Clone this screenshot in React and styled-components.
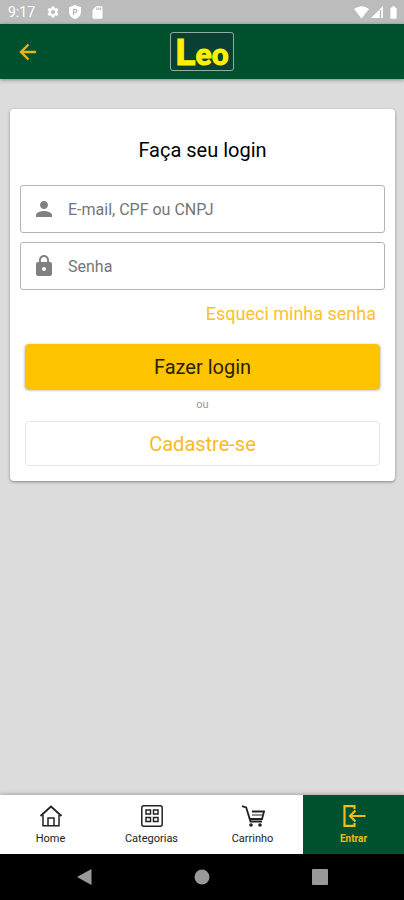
import React, { useState } from "react";
import styled, { createGlobalStyle } from "styled-components";
import {
  MdBatteryFull,
  MdLock,
  MdPerson,
  MdSdCard,
  MdSettings,
} from "react-icons/md";

const GlobalStyle = createGlobalStyle`
  * {
    box-sizing: border-box;
  }
  body {
    margin: 0;
    background-color: #dcdcdc;
    font-family: Roboto, "Liberation Sans", sans-serif;
  }
  button,
  input {
    font-family: inherit;
  }
`;

const Container = styled.div`
  min-height: 100vh;
  display: flex;
  flex-direction: column;
`;

const StatusBar = styled.div`
  height: 24px;
  padding: 0 3px 0 8px;
  display: flex;
  align-items: center;
  justify-content: space-between;
  background-color: #bcbcbc;
  color: white;
`;

const StatusGroup = styled.div`
  display: flex;
  align-items: center;
  gap: ${props => props.$gap}px;
`;

const Clock = styled.span`
  margin-right: 3px;
  font-size: 14px;
`;

const Header = styled.header`
  height: 55px;
  padding: 0 16px;
  display: grid;
  grid-template-columns: 1fr auto 1fr;
  align-items: center;
  background-color: #00512d;
  box-shadow: 0 1px 4px rgba(0, 0, 0, 0.4);
`;

const BackButton = styled.button`
  justify-self: start;
  display: flex;
  padding: 0;
  border: none;
  background: none;
  color: #eab313;
  cursor: pointer;
`;

const Logo = styled.div`
  padding: 2px 4px 0;
  border: 1px solid #8fae9c;
  border-radius: 3px;
  background-color: #0a4034;
  color: #fff000;
  font-size: 37px;
  line-height: 35px;
  font-weight: 700;
  -webkit-text-stroke: 1px #fff000;
`;

const LogoSmall = styled.span`
  font-size: 30px;
  line-height: 30px;
`;

const Main = styled.main`
  flex: 1;
  padding: 30px 9px 30px 10px;
`;

const Card = styled.form`
  padding: 29px 10px 15px;
  display: flex;
  flex-direction: column;
  background-color: white;
  border-radius: 4px;
  box-shadow: 0 1px 3px rgba(0, 0, 0, 0.4);
`;

const Title = styled.h1`
  margin: 0 0 23px;
  font-size: 20px;
  line-height: 24px;
  font-weight: 400;
  text-align: center;
  color: black;
`;

const Field = styled.label`
  height: 48px;
  margin-bottom: 9px;
  padding: 0 12px 0 11px;
  display: flex;
  align-items: center;
  gap: 12px;
  border: 1px solid #b4b4b4;
  border-radius: 3px;
  color: #808080;
`;

const Input = styled.input`
  flex: 1;
  min-width: 0;
  padding: 0;
  border: none;
  outline: none;
  background: none;
  font-size: 16px;
  color: #222;
  &::placeholder {
    color: #757575;
    opacity: 1;
  }
`;

const ForgotLink = styled.a`
  align-self: flex-end;
  margin: 3px 9px 18px;
  font-size: 18px;
  line-height: 24px;
  text-decoration: none;
  color: #fdbf30;
`;

const Actions = styled.div`
  padding: 0 5px;
  display: flex;
  flex-direction: column;
`;

const Button = styled.button`
  height: 45px;
  border: 1px solid ${props => (props.$outlined ? "#e6e6e6" : "#ffc400")};
  border-radius: 4px;
  background-color: ${props => (props.$outlined ? "white" : "#ffc400")};
  box-shadow: ${props => (props.$outlined ? "none" : "0 1px 3px rgba(0, 0, 0, 0.4)")};
  color: ${props => (props.$outlined ? "#fdb924" : "#2b2100")};
  font-size: 20px;
  cursor: pointer;
`;

const Divider = styled.span`
  font-size: 11px;
  line-height: 32px;
  text-align: center;
  color: #999;
`;

const TabBar = styled.nav`
  height: 59px;
  display: grid;
  grid-template-columns: repeat(4, 1fr);
  background-color: white;
  box-shadow: 0 -1px 4px rgba(0, 0, 0, 0.25);
`;

const Tab = styled.a`
  padding-top: 9px;
  display: flex;
  flex-direction: column;
  align-items: center;
  gap: 4px;
  font-size: ${props => (props.$active ? 10 : 11)}px;
  line-height: 14px;
  text-decoration: none;
  font-weight: ${props => (props.$active ? 700 : 400)};
  color: ${props => (props.$active ? "#f0bd18" : "#222")};
  background-color: ${props => (props.$active ? "#00512d" : "white")};
`;

const SystemBar = styled.div`
  height: 46px;
  padding: 0 76px;
  display: flex;
  align-items: center;
  justify-content: space-between;
  background-color: black;
`;

const SystemButton = styled.button`
  display: flex;
  padding: 0;
  border: none;
  background: none;
  cursor: pointer;
`;

const LineIcon = ({ children, width = 1.5 }) => (
  <svg
    width="24"
    height="24"
    viewBox="0 0 24 24"
    fill="none"
    stroke="currentColor"
    strokeWidth={width}
    aria-hidden="true"
  >
    {children}
  </svg>
);

const BackIcon = () => (
  <LineIcon width={2.4}>
    <path d="M20 12H5.500M12.500 4.500 5 12l7.500 7.500" />
  </LineIcon>
);

const HomeIcon = () => (
  <LineIcon>
    <path d="M1.500 12 12 2.500 22.500 12" strokeWidth="1.8" />
    <path d="M4 11v10.800h16V11" />
    <path d="M9 21.500v-7.500h6v7.500" />
  </LineIcon>
);

const CategoriesIcon = () => (
  <LineIcon>
    <rect x="1.800" y="1.800" width="20.400" height="20.400" rx="2" />
    <rect x="6" y="6" width="4.500" height="4" />
    <rect x="13.500" y="6" width="4.500" height="4" />
    <rect x="6" y="13.500" width="4.500" height="4" />
    <rect x="13.500" y="13.500" width="4.500" height="4" />
  </LineIcon>
);

const CartIcon = () => (
  <LineIcon>
    <path d="M1 2.200 5.200 3.500 9.500 17.500H21" strokeWidth="1.8" />
    <path d="M11 7.500h12l-2 7.500H9" strokeWidth="1.8" />
    <path d="M11 11h10.500" strokeWidth="1" />
    <circle cx="10" cy="21" r="1.800" fill="currentColor" stroke="none" />
    <circle cx="19" cy="21" r="1.800" fill="currentColor" stroke="none" />
  </LineIcon>
);

const LoginIcon = () => (
  <LineIcon width={2.2}>
    <path d="M12.500 5V2.200h-10v19.600h10V19" />
    <path d="M23.500 12H8M13.500 6.500 8 12l5.500 5.500" />
  </LineIcon>
);

const tabs = [
  { label: "Home", Icon: HomeIcon },
  { label: "Categorias", Icon: CategoriesIcon },
  { label: "Carrinho", Icon: CartIcon },
  { label: "Entrar", Icon: LoginIcon, active: true },
];

const App = () => {
  const [user, setUser] = useState("");
  const [password, setPassword] = useState("");

  const handleSubmit = (e) => {
    e.preventDefault();
  };

  return (
    <Container>
      <GlobalStyle />
      <StatusBar>
        <StatusGroup $gap={8}>
          <Clock>9:17</Clock>
          <MdSettings size={14} />
          <svg width="14" height="14" viewBox="0 0 14 14">
            <path d="M7 0 13 2.300V7c0 3.300-2.600 6-6 7-3.400-1-6-3.700-6-7V2.300z" fill="white" />
            <path d="M5.500 10V4.500h1.800a1.500 1.500 0 0 1 0 3H5.500" fill="none" stroke="#bcbcbc" strokeWidth="1.3" />
          </svg>
          <MdSdCard size={15} color="white" />
        </StatusGroup>
        <StatusGroup $gap={2}>
          <svg width="15" height="13" viewBox="0 0 15 13">
            <path d="M0 3Q7.500-2.500 15 3L7.500 12.500z" fill="white" />
          </svg>
          <svg width="13" height="13" viewBox="0 0 13 13">
            <path d="M12 0v12H0z" fill="white" />
            <path d="M9.500 4v8" stroke="#bcbcbc" strokeWidth="1.5" />
          </svg>
          <MdBatteryFull size={15} />
        </StatusGroup>
      </StatusBar>

      <Header>
        <BackButton type="button" aria-label="Voltar">
          <BackIcon />
        </BackButton>
        <Logo>
          L<LogoSmall>eo</LogoSmall>
        </Logo>
      </Header>

      <Main>
        <Card onSubmit={handleSubmit}>
          <Title>Faça seu login</Title>
          <Field>
            <MdPerson size={24} />
            <Input
              placeholder="E-mail, CPF ou CNPJ"
              aria-label="E-mail, CPF ou CNPJ"
              value={user}
              onChange={e => setUser(e.target.value)}
            />
          </Field>
          <Field>
            <MdLock size={24} />
            <Input
              type="password"
              placeholder="Senha"
              aria-label="Senha"
              value={password}
              onChange={e => setPassword(e.target.value)}
            />
          </Field>
          <ForgotLink href="#senha">Esqueci minha senha</ForgotLink>
          <Actions>
            <Button type="submit">Fazer login</Button>
            <Divider>ou</Divider>
            <Button type="button" $outlined>
              Cadastre-se
            </Button>
          </Actions>
        </Card>
      </Main>

      <TabBar>
        {tabs.map(({ label, Icon, active }) => (
          <Tab key={label} href={`#${label.toLowerCase()}`} $active={active}>
            <Icon />
            {label}
          </Tab>
        ))}
      </TabBar>

      <SystemBar>
        <SystemButton type="button" aria-label="Voltar">
          <svg width="16" height="18" viewBox="0 0 16 18">
            <path d="M15.500 1v16L1 9z" fill="#999" />
          </svg>
        </SystemButton>
        <SystemButton type="button" aria-label="Início">
          <svg width="16" height="16" viewBox="0 0 16 16">
            <circle cx="8" cy="8" r="7.500" fill="#999" />
          </svg>
        </SystemButton>
        <SystemButton type="button" aria-label="Recentes">
          <svg width="16" height="16" viewBox="0 0 16 16">
            <rect width="16" height="16" rx="1" fill="#999" />
          </svg>
        </SystemButton>
      </SystemBar>
    </Container>
  );
};

export default App;
